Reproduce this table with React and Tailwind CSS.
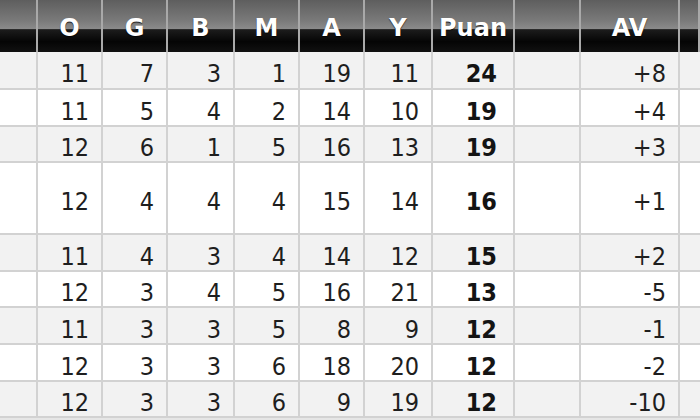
import React from "react";

const rows = [
  { h: "h-[38px]", v: ["11", "7", "3", "1", "19", "11", "24", "+8"] },
  { h: "h-[37px]", v: ["11", "5", "4", "2", "14", "10", "19", "+4"] },
  { h: "h-[36px]", v: ["12", "6", "1", "5", "16", "13", "19", "+3"] },
  { h: "h-[72px]", v: ["12", "4", "4", "4", "15", "14", "16", "+1"] },
  { h: "h-[37px]", v: ["11", "4", "3", "4", "14", "12", "15", "+2"] },
  { h: "h-[36px]", v: ["12", "3", "4", "5", "16", "21", "13", "-5"] },
  { h: "h-[37px]", v: ["11", "3", "3", "5", "8", "9", "12", "-1"] },
  { h: "h-[37px]", v: ["12", "3", "3", "6", "18", "20", "12", "-2"] },
  { h: "h-[36px]", v: ["12", "3", "3", "6", "9", "19", "12", "-10"] },
];

const headers = ["", "O", "G", "B", "M", "A", "Y", "Puan", "", "AV", ""];

const cols =
  "grid grid-cols-[38px_65px_65px_67px_65px_65px_68px_82px_66px_99px_20px]";

const cell =
  "flex items-center justify-end pt-[7px] leading-none overflow-hidden border-r-2 border-b-2 border-[#d2d2d2] text-[25px] text-[#1e1e1e] [font-family:'DejaVu_Sans_Condensed','DejaVu_Sans',sans-serif] [font-stretch:condensed]";

export default function App() {
  return (
    <div
      className="w-[700px] h-[420px] overflow-hidden bg-[#e6e6e6]"
      style={{ fontFamily: '"DejaVu Sans", Verdana, sans-serif' }}
    >
      <div className={`${cols} h-[52px]`}>
        {headers.map((h, i) => (
          <div
            key={i}
            className="flex items-center justify-center leading-none border-r-2 border-[#a9a9a9] bg-[linear-gradient(to_bottom,#5e5e5e_0%,#7a7a7a_40%,#8a8a8a_55%,#1c1c1c_57%,#050505_80%,#111111_100%)] text-white font-bold text-[24px] pt-[4px] [text-shadow:0_1px_1px_rgba(0,0,0,0.8)]"
          >
            {h}
          </div>
        ))}
      </div>
      {rows.map((r, ri) => {
        const bg = ri % 2 === 0 ? "bg-[#f2f2f2]" : "bg-white";
        return (
          <div key={ri} className={`${cols} ${r.h} ${bg}`}>
            <div className="border-r-2 border-b-2 border-[#d2d2d2]" />
            {r.v.slice(0, 6).map((x, i) => (
              <div key={i} className={`${cell} pr-[12px]`}>
                {x}
              </div>
            ))}
            <div className={`${cell} pr-[16px] font-bold text-[#141414]`}>
              {r.v[6]}
            </div>
            <div className="border-r-2 border-b-2 border-[#d2d2d2]" />
            <div className={`${cell} pr-[12px]`}>{r.v[7]}</div>
            <div className="border-b-2 border-[#d2d2d2]" />
          </div>
        );
      })}
    </div>
  );
}
